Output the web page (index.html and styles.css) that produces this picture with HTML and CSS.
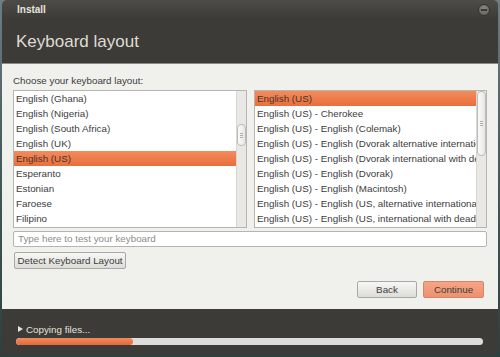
FILE: index.html
```html
<!DOCTYPE html>
<html>
<head>
<meta charset="utf-8">
<link rel="stylesheet" href="styles.css">
</head>
<body>
<div class="window">
  <div class="titlebar">
    <span class="title">Install</span>
    <span class="close"><span class="close-bar"></span></span>
  </div>
  <div class="header">Keyboard layout</div>
  <div class="content">
    <div class="label">Choose your keyboard layout:</div>
    <div class="lists">
      <div class="list list-left">
        <div class="items">
          <div class="item">English (Ghana)</div>
          <div class="item">English (Nigeria)</div>
          <div class="item">English (South Africa)</div>
          <div class="item">English (UK)</div>
          <div class="item selected">English (US)</div>
          <div class="item">Esperanto</div>
          <div class="item">Estonian</div>
          <div class="item">Faroese</div>
          <div class="item">Filipino</div>
        </div>
        <div class="scroll scroll-left"><div class="thumb thumb-left"><span class="grip"></span></div></div>
      </div>
      <div class="list list-right">
        <div class="items">
          <div class="item selected">English (US)</div>
          <div class="item">English (US) - Cherokee</div>
          <div class="item">English (US) - English (Colemak)</div>
          <div class="item">English (US) - English (Dvorak alternative international no dead keys)</div>
          <div class="item">English (US) - English (Dvorak international with dead keys)</div>
          <div class="item">English (US) - English (Dvorak)</div>
          <div class="item">English (US) - English (Macintosh)</div>
          <div class="item">English (US) - English (US, alternative international)</div>
          <div class="item">English (US) - English (US, international with dead keys)</div>
        </div>
        <div class="scroll scroll-right"><div class="thumb thumb-right"><span class="grip"></span></div></div>
      </div>
    </div>
    <div class="test-input">Type here to test your keyboard</div>
    <div class="detect-row"><div class="btn detect">Detect Keyboard Layout</div></div>
    <div class="nav-row">
      <div class="btn back">Back</div>
      <div class="btn continue">Continue</div>
    </div>
  </div>
  <div class="footer">
    <div class="status"><span class="arrow"></span>Copying files...</div>
    <div class="progress"><div class="progress-fill"></div></div>
  </div>
</div>
</body>
</html>
```
FILE: styles.css
```css
html, body {
  margin: 0;
  padding: 0;
}
body {
  width: 500px;
  height: 357px;
  overflow: hidden;
  background: linear-gradient(180deg, #6d7e86 0%, #4a5d60 40%, #2e403d 100%);
  font-family: "Liberation Sans", Arial, sans-serif;
  font-size: 9.8px;
  color: #3c3c3c;
}
.window {
  margin-left: 2px;
  width: 496px;
  height: 355px;
  display: flex;
  flex-direction: column;
  border-radius: 5px 5px 0 0;
  overflow: hidden;
}
.titlebar {
  height: 17px;
  background: linear-gradient(180deg, #4e4c47, #3e3d39);
  display: flex;
  align-items: center;
  justify-content: space-between;
  padding: 0 8px 0 15px;
}
.title {
  color: #e6e3de;
  font-weight: bold;
  font-size: 10px;
  margin-top: 1px;
}
.close {
  width: 10px;
  height: 10px;
  border-radius: 50%;
  background: radial-gradient(circle at 50% 35%, #8a8883, #5d5c57);
  border: 1px solid #35342f;
  display: flex;
  align-items: center;
  justify-content: center;
  margin-top: 3px;
}
.close-bar {
  width: 6px;
  height: 2px;
  background: #3a3935;
}
.header {
  height: 47px;
  background: #3c3b37;
  color: #dfdbd2;
  font-size: 17px;
  display: flex;
  align-items: center;
  padding-left: 14px;
  padding-top: 4px;
  box-sizing: border-box;
  border-bottom: 1px solid #8a8983;
}
.content {
  height: 245px;
  background: #f0f0ed;
  padding: 0 11px;
  box-sizing: border-box;
  display: flex;
  flex-direction: column;
}
.label {
  height: 26px;
  display: flex;
  align-items: flex-end;
  padding-bottom: 4px;
  box-sizing: border-box;
}
.lists {
  display: flex;
  justify-content: space-between;
  height: 138px;
}
.list {
  display: flex;
  background: #fff;
  border: 1px solid #b6b5b0;
  box-sizing: border-box;
  height: 138px;
  overflow: hidden;
}
.list-left { width: 234px; }
.list-right { width: 233px; }
.items {
  flex: 1;
  min-width: 0;
  overflow: hidden;
}
.item {
  height: 15px;
  line-height: 15px;
  padding-left: 2px;
  white-space: nowrap;
  overflow: hidden;
}
.selected {
  background: linear-gradient(180deg, #f28b5c, #e96f3c);
  color: #4a3328;
}
.scroll {
  width: 9px;
  background: #e9e8e5;
  border-left: 1px solid #d8d7d3;
  position: relative;
}
.thumb {
  position: absolute;
  left: 0;
  width: 7px;
  border: 1px solid #bdbcb8;
  border-radius: 4px;
  background: linear-gradient(90deg, #fafaf9, #e6e5e2);
  display: flex;
  align-items: center;
  justify-content: center;
}
.thumb-left { top: 33px; height: 20px; }
.thumb-right { top: 0; height: 63px; }
.grip {
  width: 3px;
  height: 5px;
  border-top: 1px solid #b0afab;
  border-bottom: 1px solid #b0afab;
  box-sizing: border-box;
  position: relative;
}
.grip::after {
  content: "";
  position: absolute;
  left: 0;
  top: 1px;
  width: 3px;
  height: 1px;
  background: #b0afab;
}
.test-input {
  margin-top: 3px;
  height: 16px;
  background: #fff;
  border: 1px solid #b6b5b0;
  border-radius: 2px;
  box-sizing: border-box;
  color: #8e8d8a;
  line-height: 14px;
  padding-left: 4px;
}
.detect-row {
  display: flex;
  margin-top: 5px;
}
.btn {
  box-sizing: border-box;
  border: 1px solid #a9a8a3;
  border-radius: 2px;
  background: linear-gradient(180deg, #f7f7f5, #dcdcd8);
  display: flex;
  align-items: center;
  justify-content: center;
  color: #3c3c3c;
  white-space: nowrap;
}
.detect {
  width: 112px;
  height: 17px;
  margin-left: 1px;
}
.nav-row {
  display: flex;
  justify-content: flex-end;
  gap: 6px;
  margin-top: 12px;
  padding-right: 3px;
}
.back {
  width: 60px;
  height: 17px;
}
.continue {
  width: 61px;
  height: 17px;
  background: linear-gradient(180deg, #f4a585, #ee9170);
  border-color: #d98565;
}
.footer {
  flex: 1;
  background: #3c3b37;
  padding: 14px 0 0 14px;
  box-sizing: border-box;
}
.status {
  color: #e6e3de;
  display: flex;
  align-items: center;
  height: 12px;
}
.arrow {
  width: 0;
  height: 0;
  border-left: 5px solid #e6e3de;
  border-top: 3.5px solid transparent;
  border-bottom: 3.5px solid transparent;
  margin-right: 3px;
  margin-left: 2px;
}
.progress {
  margin-top: 3px;
  width: 467px;
  height: 7px;
  border-radius: 4px;
  background: #dedddb;
  overflow: hidden;
}
.progress-fill {
  width: 117px;
  height: 7px;
  border-radius: 4px;
  background: linear-gradient(180deg, #f28b5c, #e4693a);
}
```
